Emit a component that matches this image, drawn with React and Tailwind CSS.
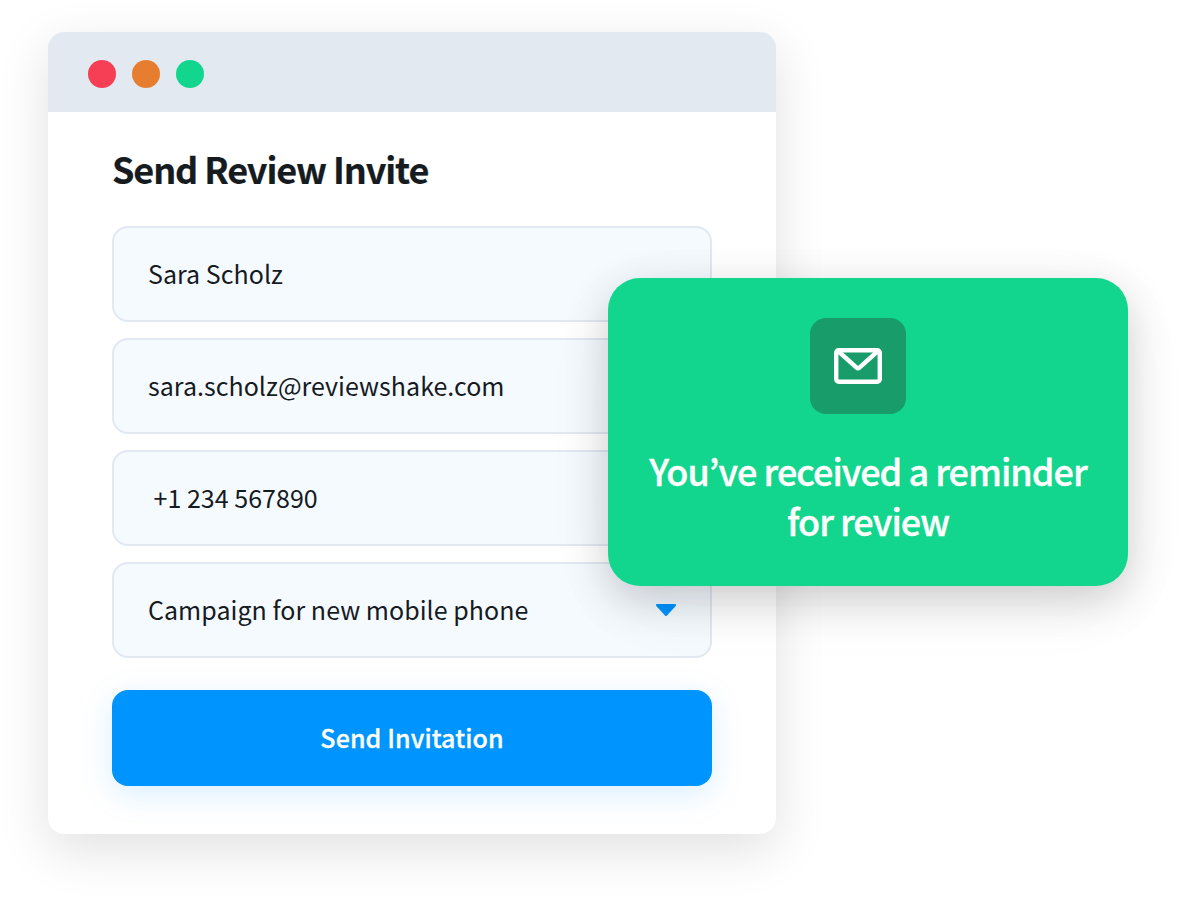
const fieldClass =
  "flex h-24 items-center rounded-2xl border-2 border-[#e1e8f1] bg-[#f5faff] px-[34px] text-[25px] tracking-[0.03px]";

function Field({ children, className = "" }) {
  return <div className={`${fieldClass} ${className}`}>{children}</div>;
}

export default function App() {
  return (
    <div className="relative h-[898px] w-[1192px] overflow-hidden bg-white px-12 py-8 font-['Noto_Sans_CJK_KR',sans-serif] text-[#161b1f]">
      <main className="h-[802px] w-[728px] overflow-hidden rounded-2xl bg-white shadow-[0_16px_52px_rgba(0,0,0,0.12)]">
        <header className="flex h-20 items-center gap-4 bg-[#e2e9f0] px-10 pt-1">
          <span className="size-7 rounded-full bg-[#f63e54]" />
          <span className="size-7 rounded-full bg-[#e77e2f]" />
          <span className="size-7 rounded-full bg-[#12d68d]" />
        </header>
        <section className="px-16 pt-7">
          <h1 className="h-[86px] whitespace-nowrap text-[36px] font-bold leading-[56px] tracking-[-1.12px] [-webkit-text-stroke:0.2px_#161b1f]">
            Send Review Invite
          </h1>
          <div className="flex flex-col gap-4">
            <Field>Sara Scholz</Field>
            <Field>sara.scholz@reviewshake.com</Field>
            <Field className="pl-[39.5px]">+1 234 567890</Field>
            <Field className="justify-between">
              <span>Campaign for new mobile phone</span>
              <svg width="20" height="12" viewBox="0 0 20 12" fill="#0094ff">
                <path d="M1 0h18c1 0 1.300 1.200.7 1.900l-8.700 9.500c-.6.700-1.400.7-2 0L.3 1.900C-.3 1.200 0 0 1 0Z" />
              </svg>
            </Field>
          </div>
          <button className="mt-8 h-24 w-full rounded-2xl bg-[#0094ff] text-[25px] font-medium tracking-[0.1px] text-white shadow-[0_8px_32px_rgba(0,148,255,0.15)] [-webkit-text-stroke:0.3px_white]">
            Send Invitation
          </button>
        </section>
      </main>
      <aside className="absolute left-[608px] top-[278px] flex h-[308px] w-[520px] flex-col items-center rounded-[32px] bg-[#12d68d] pt-10 text-white shadow-[0_14px_44px_rgba(0,0,12,0.19),0_20px_88px_rgba(0,20,10,0.03)]">
        <div className="mr-5 flex size-24 items-center justify-center rounded-2xl bg-[#189d6a]">
          <svg width="48" height="36" viewBox="0 0 48 36" fill="none" stroke="white" strokeWidth="4.4" strokeLinejoin="round">
            <rect x="2.200" y="2.200" width="43.600" height="31.600" rx="2.500" />
            <path d="M4 3 22.600 19.600q1.400 1.200 2.800 0L44 3" />
          </svg>
        </div>
        <p className="mt-[31px] whitespace-nowrap text-center text-[36px] font-medium leading-[50px] tracking-[-0.98px] [-webkit-text-stroke:0.35px_white]">
          You’ve received a reminder
          <br />
          for review
        </p>
      </aside>
    </div>
  );
}
